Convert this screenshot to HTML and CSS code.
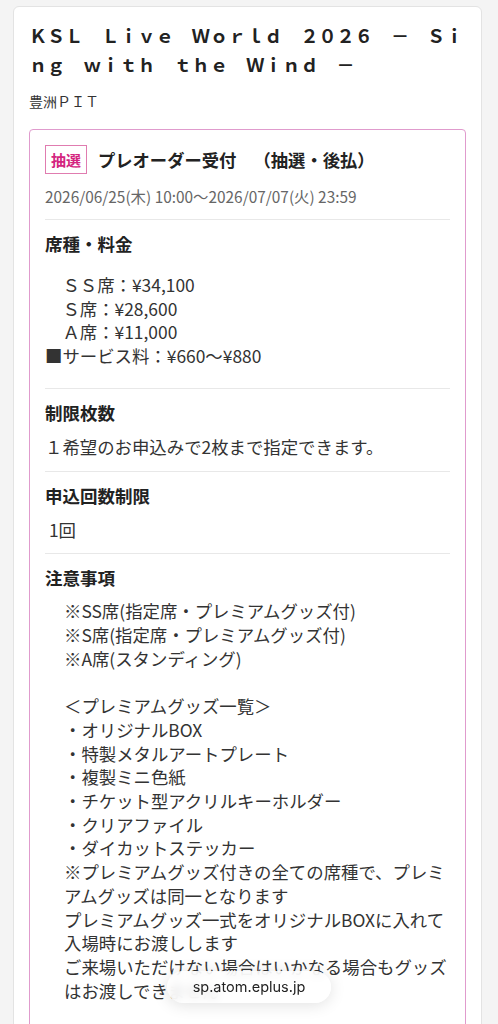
FILE: index.html
```html
<!DOCTYPE html>
<html lang="ja">
<head>
    <meta charset="UTF-8">
    <meta name="viewport" content="width=device-width, initial-scale=1.0">
    <title>KSL Live World 2026 - Sing with the Wind -</title>
    <link rel="stylesheet" href="styles.css">
</head>
<body>
    <div class="event">
        <h1 class="event-title">ＫＳＬ　Ｌｉｖｅ　Ｗｏｒｌｄ　２０２６　－　Ｓｉｎｇ　ｗｉｔｈ　ｔｈｅ　Ｗｉｎｄ　－</h1>
        <p class="venue">豊洲ＰＩＴ</p>

        <div class="sale">
            <div class="sale-head">
                <span class="badge">抽選</span>
                <span class="sale-name">プレオーダー受付　（抽選・後払）</span>
            </div>
            <p class="sale-date">2026/06/25(木) 10:00～2026/07/07(火) 23:59</p>

            <div class="info">
                <h2>席種・料金</h2>
                <p class="info-body prices">
                    　ＳＳ席：¥34,100<br>
                    　Ｓ席：¥28,600<br>
                    　Ａ席：¥11,000<br>
                    ■サービス料：¥660～¥880
                </p>
            </div>

            <div class="info">
                <h2>制限枚数</h2>
                <p class="info-body">１希望のお申込みで2枚まで指定できます。</p>
            </div>

            <div class="info">
                <h2>申込回数制限</h2>
                <p class="info-body">&nbsp;1回</p>
            </div>

            <div class="info">
                <h2>注意事項</h2>
                <p class="info-body notes">
                    ※SS席(指定席・プレミアムグッズ付)<br>
                    ※S席(指定席・プレミアムグッズ付)<br>
                    ※A席(スタンディング)<br>
                    <br>
                    ＜プレミアムグッズ一覧＞<br>
                    ・オリジナルBOX<br>
                    ・特製メタルアートプレート<br>
                    ・複製ミニ色紙<br>
                    ・チケット型アクリルキーホルダー<br>
                    ・クリアファイル<br>
                    ・ダイカットステッカー<br>
                    ※プレミアムグッズ付きの全ての席種で、プレミアムグッズは同一となります<br>
                    プレミアムグッズ一式をオリジナルBOXに入れて入場時にお渡しします<br>
                    ご来場いただけない場合はいかなる場合もグッズはお渡しできません
                </p>
            </div>
        </div>
    </div>

    <div class="url-bar">sp.atom.eplus.jp</div>
</body>
</html>
```

FILE: styles.css
```css
body {
    margin: 0;
    padding: 6px 16px 0 13px;
    background: #f4f4f4;
    font-family: "Noto Sans CJK JP", "Noto Sans", sans-serif;
    color: #333;
    text-spacing-trim: space-all;
}
.event {
    background: #fff;
    border: 1px solid #e3e3e3;
    border-radius: 6px;
    padding: 14px 15px 0;
}
.event-title {
    margin: 0;
    font-size: 18.1px;
    line-height: 29px;
    font-weight: 700;
    color: #222;
}
.venue {
    margin: 12px 0 0;
    font-size: 14px;
    line-height: 20px;
    color: #333;
}
.sale {
    margin-top: 18px;
    border: 1px solid #e09bcd;
    border-radius: 4px;
    padding: 15px 15px 40px;
}
.sale-head {
    display: flex;
    align-items: center;
    gap: 11px;
}
.badge {
    display: inline-block;
    border: 1px solid #e07cb0;
    color: #d4257f;
    font-size: 15px;
    font-weight: 700;
    line-height: 27px;
    padding: 0 5px;
}
.sale-name {
    font-size: 17.3px;
    font-weight: 700;
    color: #222;
}
.sale-date {
    margin: 11px 0 0;
    padding-bottom: 12px;
    font-size: 15.4px;
    line-height: 22px;
    color: #666;
}
.info {
    border-top: 1px solid #e8e8e8;
    padding: 12px 0;
}
.info h2 {
    margin: 0;
    font-size: 17.5px;
    line-height: 24px;
    font-weight: 700;
    color: #222;
}
.info-body {
    margin: 10px 0 0;
    font-size: 17.4px;
    line-height: 23.7px;
    color: #333;
}
.prices {
    margin-top: 17px;
    margin-bottom: 9px;
    line-height: 23.5px;
}
.notes {
    margin-top: 9px;
    padding-left: 19px;
}
.url-bar {
    position: fixed;
    left: 50%;
    bottom: 21px;
    transform: translateX(-50%);
    width: 164px;
    height: 32px;
    border-radius: 16px;
    background: rgba(255, 255, 255, 0.82);
    backdrop-filter: blur(5px);
    box-shadow: 0 2px 16px rgba(0, 0, 0, 0.12);
    font-family: Inter, "Liberation Sans", sans-serif;
    font-size: 14.5px;
    line-height: 32px;
    text-align: center;
    color: #222;
}
```
